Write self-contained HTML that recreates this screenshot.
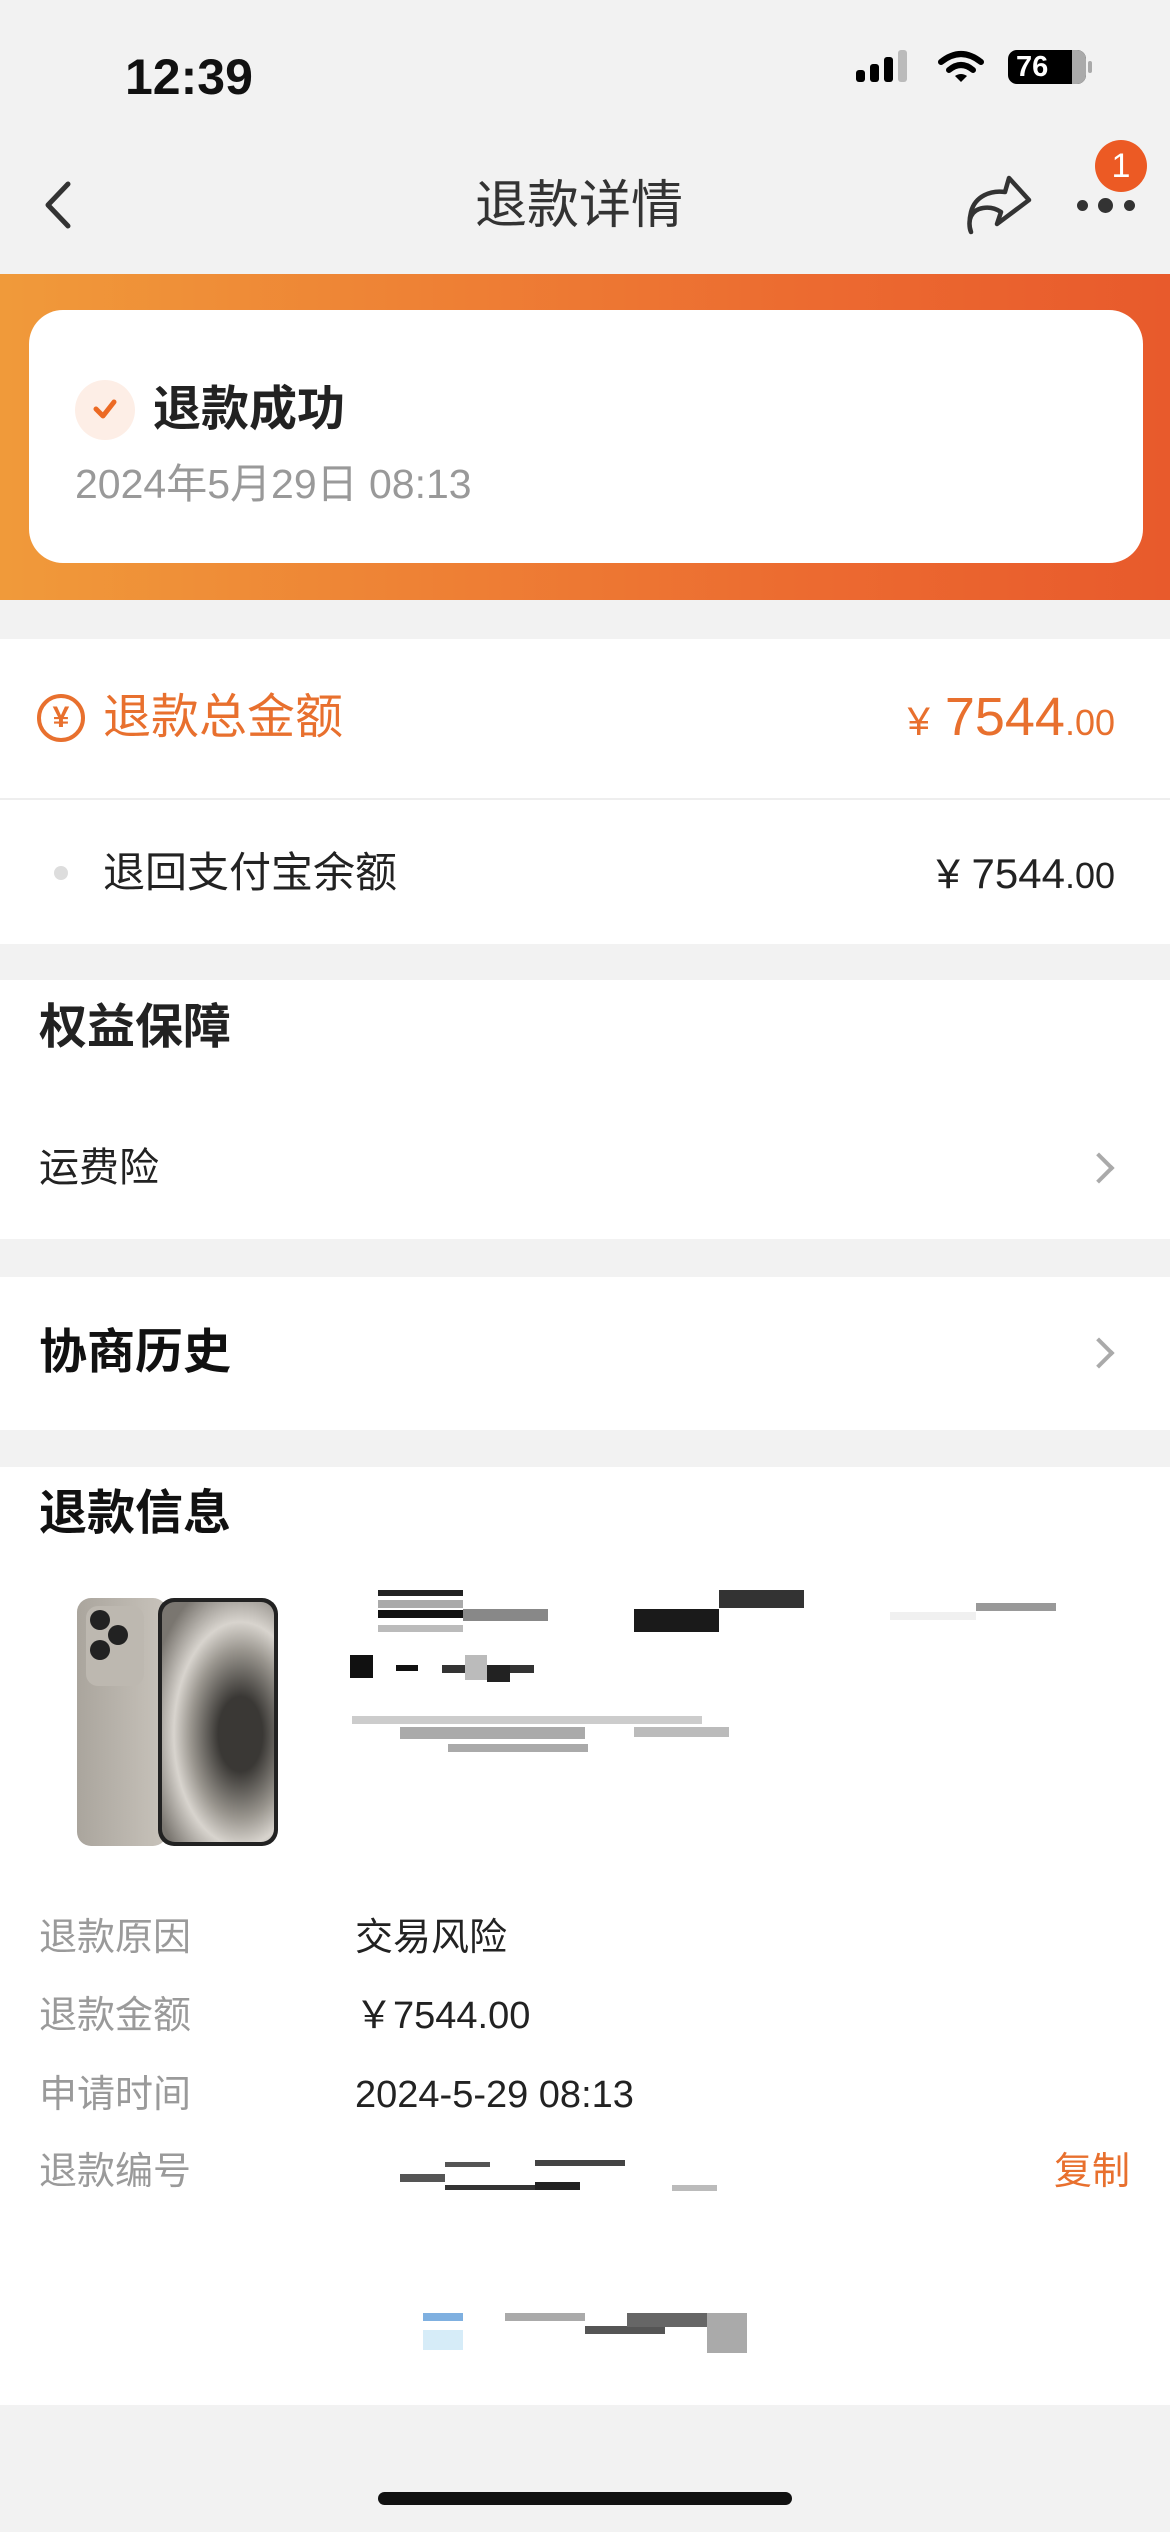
<!DOCTYPE html>
<html><head><meta charset="utf-8"><style>
*{margin:0;padding:0;box-sizing:border-box}
body{width:1170px;height:2532px;background:#f2f2f2;position:relative;overflow:hidden;font-family:"Liberation Sans","Noto Sans CJK SC",sans-serif;color:#111}
.a{position:absolute}
.t{position:absolute;white-space:nowrap;line-height:1}
.sec{position:absolute;left:0;width:1170px;background:#fff}
.chev{position:absolute;width:22px;height:22px;border-right:4px solid #aaa;border-top:4px solid #aaa;transform:rotate(45deg)}
.lab{color:#9a9a9a;font-size:38px;left:39px}
.val{color:#222;font-size:38px;left:355px}
.g{position:absolute}
</style></head><body>
<!-- status bar -->
<div class="t" style="left:125px;top:52px;font-size:50px;font-weight:bold">12:39</div>
<div class="a" style="left:856px;top:70px;width:9px;height:12px;background:#000;border-radius:3px"></div>
<div class="a" style="left:870px;top:64px;width:9px;height:18px;background:#000;border-radius:3px"></div>
<div class="a" style="left:884px;top:57px;width:9px;height:25px;background:#000;border-radius:3px"></div>
<div class="a" style="left:898px;top:50px;width:9px;height:32px;background:#bbb;border-radius:3px"></div>
<svg class="a" style="left:937px;top:50px" width="48" height="34" viewBox="0 0 48 34"><path d="M4 12 Q24 -4 44 12" stroke="#000" stroke-width="6" fill="none" stroke-linecap="round"/><path d="M12 20 Q24 10 36 20" stroke="#000" stroke-width="6" fill="none" stroke-linecap="round"/><path d="M18 26 L24 32 L30 26 Q24 22 18 26Z" fill="#000"/></svg>
<div class="a" style="left:1008px;top:50px;width:78px;height:34px;background:#000;border-radius:9px;overflow:hidden"><div class="a" style="right:0;top:0;width:14px;height:34px;background:#aaa"></div><div class="t" style="left:8px;top:3px;color:#fff;font-size:29px;font-weight:bold">76</div></div>
<div class="a" style="left:1088px;top:61px;width:4px;height:12px;background:#aaa;border-radius:2px"></div>
<!-- nav -->
<svg class="a" style="left:40px;top:180px" width="36" height="50" viewBox="0 0 36 50"><path d="M28 4 L8 25 L28 46" stroke="#333" stroke-width="5" fill="none" stroke-linecap="round" stroke-linejoin="round"/></svg>
<div class="t" style="left:475px;top:180px;font-size:52px;color:#333">退款详情</div>
<svg class="a" style="left:965px;top:170px" width="70" height="70" viewBox="0 0 70 70"><path d="M6 62 C2 50 6 40 18 38 C24 37 30 38 36 42 L32 54 L64 30 L44 8 L40 22 C26 20 10 26 6 42 C4 50 4 58 6 62Z" stroke="#333" stroke-width="4.5" fill="none" stroke-linejoin="round"/></svg>
<div class="a" style="left:1077px;top:200px;width:11px;height:11px;background:#333;border-radius:50%"></div>
<div class="a" style="left:1098px;top:198px;width:15px;height:15px;background:#333;border-radius:50%"></div>
<div class="a" style="left:1124px;top:200px;width:11px;height:11px;background:#333;border-radius:50%"></div>
<div class="a" style="left:1095px;top:140px;width:52px;height:52px;background:#ec5a24;border-radius:50%;color:#fff;font-size:34px;text-align:center;line-height:52px">1</div>
<!-- orange band -->
<div class="a" style="left:0;top:274px;width:1170px;height:326px;background:linear-gradient(90deg,#f09a3a,#ec6a30 70%,#e85a2c)"></div>
<div class="a" style="left:29px;top:310px;width:1114px;height:253px;background:#fff;border-radius:34px"></div>
<div class="a" style="left:75px;top:380px;width:60px;height:60px;background:#fdeee6;border-radius:50%"></div>
<svg class="a" style="left:88px;top:392px" width="34" height="34" viewBox="0 0 34 34"><path d="M8 17 L15 24 L26 10" stroke="#ec6a24" stroke-width="5" fill="none" stroke-linecap="round" stroke-linejoin="round"/></svg>
<div class="t" style="left:153px;top:386px;font-size:48px;font-weight:bold;color:#222">退款成功</div>
<div class="t" style="left:75px;top:464px;font-size:41px;color:#999">2024年5月29日 08:13</div>
<!-- total -->
<div class="sec" style="top:639px;height:305px"></div>
<div class="a" style="left:0;top:798px;width:1170px;height:2px;background:#eee"></div>
<div class="a" style="left:37px;top:694px;width:48px;height:48px;border:4px solid #e8702e;border-radius:50%;color:#e8702e;font-size:30px;font-weight:bold;text-align:center;line-height:40px">¥</div>
<div class="t" style="left:103px;top:694px;font-size:48px;color:#e8702e">退款总金额</div>
<div class="t" style="right:55px;top:690px;font-size:54px;color:#e8702e"><span style="font-size:40px">¥</span> 7544<span style="font-size:36px">.00</span></div>
<div class="a" style="left:54px;top:866px;width:14px;height:14px;background:#ddd;border-radius:50%"></div>
<div class="t" style="left:103px;top:852px;font-size:42px;color:#222">退回支付宝余额</div>
<div class="t" style="right:55px;top:853px;font-size:42px;color:#222">¥ 7544<span style="font-size:36px">.00</span></div>
<!-- 权益保障 -->
<div class="sec" style="top:980px;height:259px"></div>
<div class="t" style="left:39px;top:1004px;font-size:48px;font-weight:bold;color:#222">权益保障</div>
<div class="t" style="left:39px;top:1148px;font-size:40px;color:#222">运费险</div>
<div class="chev" style="left:1088px;top:1157px"></div>
<!-- 协商历史 -->
<div class="sec" style="top:1277px;height:153px"></div>
<div class="t" style="left:39px;top:1329px;font-size:48px;font-weight:bold;color:#111">协商历史</div>
<div class="chev" style="left:1088px;top:1342px"></div>
<!-- 退款信息 -->
<div class="sec" style="top:1467px;height:938px"></div>
<div class="t" style="left:39px;top:1490px;font-size:48px;font-weight:bold;color:#111">退款信息</div>
<!-- phone -->
<div class="a" style="left:77px;top:1598px;width:90px;height:248px;background:linear-gradient(90deg,#aaa59d,#c8c3bb);border-radius:14px"></div>
<div class="a" style="left:86px;top:1606px;width:58px;height:80px;background:#bdb8b0;border-radius:12px"></div>
<div class="a" style="left:90px;top:1610px;width:20px;height:20px;background:#222;border-radius:50%"></div>
<div class="a" style="left:108px;top:1625px;width:20px;height:20px;background:#222;border-radius:50%"></div>
<div class="a" style="left:90px;top:1640px;width:20px;height:20px;background:#222;border-radius:50%"></div>
<div class="a" style="left:158px;top:1598px;width:120px;height:248px;background:#222;border-radius:16px;padding:4px"><div style="width:100%;height:100%;border-radius:13px;background:radial-gradient(ellipse at 70% 55%,#3a3835 20%,#9a968f 45%,#d8d4ce 60%,#7a7670 85%)"></div></div>
<!-- redacted blur blocks -->
<div class="g" style="left:378px;top:1590px;width:85px;height:6px;background:#222"></div>
<div class="g" style="left:378px;top:1600px;width:85px;height:8px;background:#aaa"></div>
<div class="g" style="left:378px;top:1610px;width:85px;height:8px;background:#111"></div>
<div class="g" style="left:463px;top:1609px;width:85px;height:12px;background:#888"></div>
<div class="g" style="left:378px;top:1625px;width:85px;height:7px;background:#bbb"></div>
<div class="g" style="left:634px;top:1609px;width:85px;height:23px;background:#1a1a1a"></div>
<div class="g" style="left:719px;top:1590px;width:85px;height:18px;background:#333"></div>
<div class="g" style="left:976px;top:1603px;width:80px;height:8px;background:#999"></div>
<div class="g" style="left:890px;top:1612px;width:86px;height:8px;background:#f0f0f0"></div>
<div class="g" style="left:350px;top:1655px;width:23px;height:23px;background:#111"></div>
<div class="g" style="left:396px;top:1665px;width:22px;height:6px;background:#111"></div>
<div class="g" style="left:442px;top:1665px;width:92px;height:8px;background:#333"></div>
<div class="g" style="left:465px;top:1655px;width:22px;height:25px;background:#bbb"></div>
<div class="g" style="left:487px;top:1665px;width:23px;height:17px;background:#222"></div>
<div class="g" style="left:352px;top:1716px;width:350px;height:8px;background:#ccc"></div>
<div class="g" style="left:400px;top:1727px;width:185px;height:12px;background:#aaa"></div>
<div class="g" style="left:634px;top:1727px;width:95px;height:10px;background:#bbb"></div>
<div class="g" style="left:448px;top:1744px;width:140px;height:8px;background:#aaa"></div>
<!-- rows -->
<div class="t lab" style="top:1919px">退款原因</div><div class="t val" style="top:1919px">交易风险</div>
<div class="t lab" style="top:1997px">退款金额</div><div class="t val" style="top:1997px">￥7544.00</div>
<div class="t lab" style="top:2076px">申请时间</div><div class="t val" style="top:2076px">2024-5-29 08:13</div>
<div class="t lab" style="top:2153px">退款编号</div>
<div class="g" style="left:400px;top:2174px;width:45px;height:8px;background:#555"></div>
<div class="g" style="left:445px;top:2162px;width:45px;height:5px;background:#555"></div>
<div class="g" style="left:445px;top:2185px;width:90px;height:5px;background:#333"></div>
<div class="g" style="left:535px;top:2160px;width:90px;height:6px;background:#444"></div>
<div class="g" style="left:535px;top:2182px;width:45px;height:8px;background:#222"></div>
<div class="g" style="left:672px;top:2185px;width:45px;height:6px;background:#bbb"></div>
<div class="t" style="right:40px;top:2153px;font-size:38px;color:#e8702e">复制</div>
<!-- bottom blur -->
<div class="g" style="left:423px;top:2313px;width:40px;height:8px;background:#7fb0e0"></div>
<div class="g" style="left:423px;top:2330px;width:40px;height:20px;background:#d6ecf8"></div>
<div class="g" style="left:505px;top:2313px;width:80px;height:8px;background:#aaa"></div>
<div class="g" style="left:585px;top:2326px;width:80px;height:8px;background:#555"></div>
<div class="g" style="left:627px;top:2313px;width:80px;height:14px;background:#666"></div>
<div class="g" style="left:707px;top:2313px;width:40px;height:40px;background:#aaa"></div>
<!-- home indicator -->
<div class="a" style="left:378px;top:2492px;width:414px;height:13px;background:#111;border-radius:7px"></div>
</body></html>
